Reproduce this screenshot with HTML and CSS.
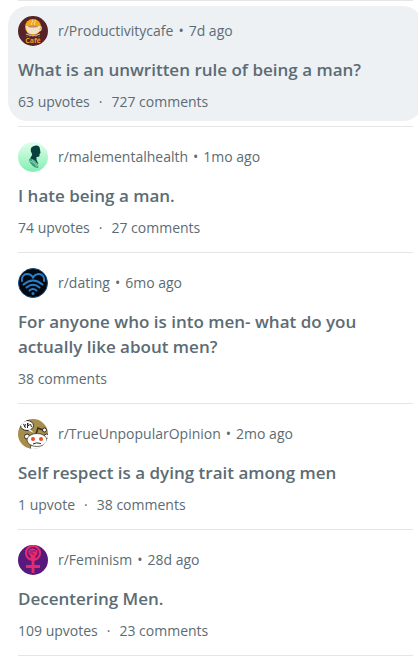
FILE: index.html
```html
<!DOCTYPE html>
<html lang="en">
<head>
<meta charset="utf-8">
<meta name="viewport" content="width=device-width, initial-scale=1">
<title>Related posts</title>
<link rel="stylesheet" href="styles.css">
</head>
<body>
<main class="posts">
  <article class="post">
    <div class="card card-active">
      <header class="source">
        <svg class="avatar" viewBox="0 0 30 30" aria-hidden="true">
          <circle cx="15" cy="15" r="15" fill="#552328"/>
          <circle cx="15" cy="11" r="8" fill="#f6a516"/>
          <path d="M14 9c-2-2 2-3 0-5M17 9c-2-2 1-3 0-5" fill="none" stroke="#ffe5a3" stroke-width="1"/>
          <path d="M21 11h2q1 4-3 4" fill="none" stroke="#e9d3b4" stroke-width="1.3"/>
          <path d="M8 10h14q0 7-5 8h-4q-5-1-5-8z" fill="#efe2c9"/>
          <ellipse cx="15" cy="10.500" rx="5" ry="1" fill="#c08a5c"/>
          <path d="M8 18q7 3 14 0" fill="none" stroke="#d6b393" stroke-width="1.200"/>
          <path d="M8 20.500h14" stroke="#7b4d4a" stroke-width="1" stroke-dasharray="2 1"/>
          <text class="cafe-label" x="15" y="27" text-anchor="middle">Café</text>
        </svg>
        <span>r/Productivitycafe</span><span>•</span><span>7d ago</span>
      </header>
      <h2 class="title">What is an unwritten rule of being a man?</h2>
      <p class="stats"><span>63 upvotes</span><span>·</span><span>727 comments</span></p>
    </div>
  </article>
  <article class="post">
    <div class="card">
      <header class="source">
        <svg class="avatar" viewBox="0 0 30 30" aria-hidden="true">
          <defs><linearGradient id="mint" x1="0" y1="0" x2="0" y2="1"><stop offset="0" stop-color="#e2ffed"/><stop offset="1" stop-color="#82eeb0"/></linearGradient></defs>
          <circle cx="15" cy="15" r="15" fill="url(#mint)"/>
          <path d="M14 12q-2-3-1-6 2-3 6-2.500 3 .5 3 4l.5 3.500-1 1v2q-.5 1-3 1v3l2 4-8-3q-1-3 1-5 1-1 .5-2z" fill="#073f3d"/>
          <path d="M11 17q5-1 8 4 2 3 1 5-4 0-7-4-2-2-2-5z" fill="#3c9b7c"/>
          <path d="M12 19q5 1 7 6M14 18q4 2 6 6" fill="none" stroke="#8bd9b4"/>
        </svg>
        <span>r/malementalhealth</span><span>•</span><span>1mo ago</span>
      </header>
      <h2 class="title">I hate being a man.</h2>
      <p class="stats"><span>74 upvotes</span><span>·</span><span>27 comments</span></p>
    </div>
  </article>
  <article class="post">
    <div class="card">
      <header class="source">
        <svg class="avatar" viewBox="0 0 30 30" aria-hidden="true">
          <circle cx="15" cy="15" r="14.500" fill="#05080d" stroke="#125084"/>
          <g fill="none" stroke="#2581d0" stroke-width="2" stroke-linecap="round">
            <path d="M4 13C3 9 6 6 9 6q4 0 6 3.500 2-3.500 6-3.500c3 0 6 3 5 7"/>
            <path d="M5.500 16.500q9.500-8 19 0"/>
            <path d="M8.500 19.500q6.500-5.500 13 0"/>
            <path d="M11.500 22.500q3.500-3 7 0"/>
          </g>
          <circle cx="15" cy="25.500" r="1.500" fill="#2581d0"/>
        </svg>
        <span>r/dating</span><span>•</span><span>6mo ago</span>
      </header>
      <h2 class="title">For anyone who is into men- what do you actually like about men?</h2>
      <p class="stats"><span>38 comments</span></p>
    </div>
  </article>
  <article class="post">
    <div class="card">
      <header class="source">
        <svg class="avatar" viewBox="0 0 30 30" aria-hidden="true">
          <defs><clipPath id="disc"><circle cx="15" cy="15" r="15"/></clipPath></defs>
          <g clip-path="url(#disc)">
            <path d="M0 0h30v30H0z" fill="#a58e4b"/>
            <path d="M18 15l2-6 5 2" fill="none" stroke="#302a20" stroke-width="1.500"/>
            <circle cx="26.500" cy="11" r="2" fill="#fff" stroke="#302a20"/>
            <ellipse cx="9" cy="6.500" rx="6.500" ry="5" fill="#fff" stroke="#302a20"/>
            <path d="M12 10l4 4-6-3z" fill="#fff"/>
            <path d="M5.500 5l2 4M7.500 5l-1 3M9.500 9V4l2 2-2 1M12.500 5l1 3" fill="none" stroke="#302a20"/>
            <circle cx="9" cy="17.500" r="2.500" fill="#fff" stroke="#302a20"/>
            <circle cx="28.500" cy="17.500" r="2.500" fill="#fff" stroke="#302a20"/>
            <path d="M13 26h12l1 5H12z" fill="#fff" stroke="#302a20" stroke-width=".7"/>
            <ellipse cx="19" cy="21" rx="10" ry="6.500" fill="#fff" stroke="#302a20" stroke-width=".7"/>
            <circle cx="15" cy="20" r="2" fill="#f24b25"/>
            <circle cx="23" cy="20" r="2" fill="#f24b25"/>
            <path d="M15 25q3-2 8-.5" fill="none" stroke="#302a20"/>
          </g>
        </svg>
        <span>r/TrueUnpopularOpinion</span><span>•</span><span>2mo ago</span>
      </header>
      <h2 class="title">Self respect is a dying trait among men</h2>
      <p class="stats"><span>1 upvote</span><span>·</span><span>38 comments</span></p>
    </div>
  </article>
  <article class="post">
    <div class="card">
      <header class="source">
        <svg class="avatar" viewBox="0 0 30 30" aria-hidden="true">
          <circle cx="15" cy="15" r="15" fill="#57197c"/>
          <g fill="none" stroke="#e52b6e">
            <circle cx="15" cy="8" r="7" stroke-width="2.200"/>
            <path d="M15 15v13M8 21.500h14" stroke-width="2.800"/>
          </g>
          <path d="M11.500 5q0-2 2-1 1-2 2 0 2-1 2 1 2-1 2 1v2q0 2-2 3v4h-5v-4l-2-2V6z" fill="#e52b6e"/>
          <path d="M13 5v2M15 5v2M17 5v2M11.500 8h3l1 2" fill="none" stroke="#57197c" stroke-width=".8"/>
        </svg>
        <span>r/Feminism</span><span>•</span><span>28d ago</span>
      </header>
      <h2 class="title">Decentering Men.</h2>
      <p class="stats"><span>109 upvotes</span><span>·</span><span>23 comments</span></p>
    </div>
  </article>
</main>
</body>
</html>
```
FILE: styles.css
```css
* {
  box-sizing: border-box;
}

body {
  margin: 0;
  overflow-x: hidden;
  background: #fff;
  color: #5c6c74;
  font: 14px/20px "Segoe UI", "Open Sans", "Noto Sans", sans-serif;
}

.posts {
  margin: 0 -5px 0 8px;
}

.post::before,
.post:last-child::after {
  content: "";
  display: block;
  height: 1px;
  margin: 0 10px;
  background: #e5e5e5;
}

.card {
  margin: 5px 0;
  padding: 10px 10px 9px;
  border-radius: 20px;
}

.card-active {
  background: #edf1f4;
}

.source {
  display: flex;
  align-items: center;
  gap: 5px;
}

.avatar {
  flex: none;
  width: 30px;
  height: 30px;
  margin-right: 5px;
}

.cafe-label {
  fill: #f39a24;
  font-size: 7px;
  font-weight: 700;
}

.title {
  margin: 11px 0 10px;
  font-size: 17px;
  font-weight: 600;
  line-height: 25px;
}

.stats {
  display: flex;
  gap: 9px;
  margin: 0;
}
```
